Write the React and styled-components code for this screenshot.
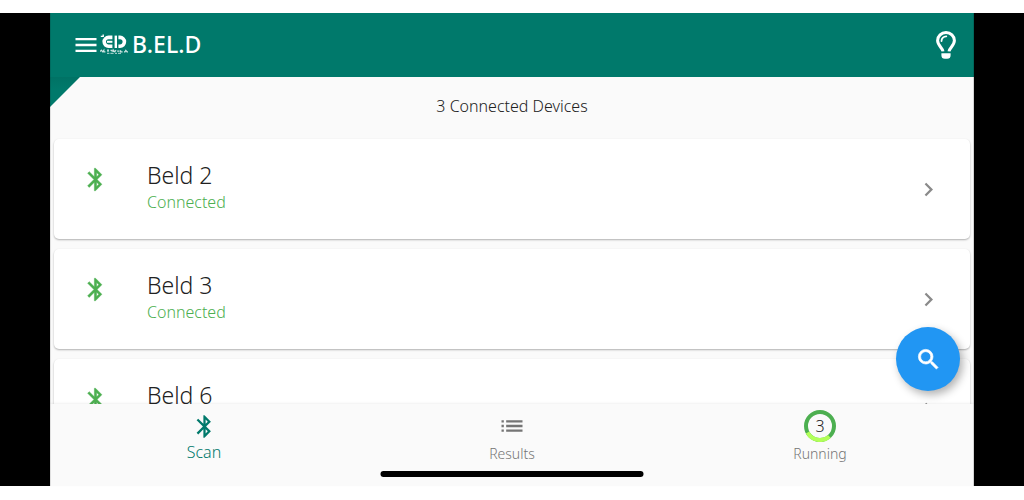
import styled, { createGlobalStyle } from "styled-components";
import {
    MdBluetooth,
    MdChevronRight,
    MdList,
    MdMenu,
    MdSearch,
} from "react-icons/md";

const devices = ["Beld 2", "Beld 3", "Beld 6"];

export default function App() {
    return (
        <>
            <GlobalStyle />
            <Page>
                <Screen>
                    <TopBar>
                        <IconButton aria-label="Open menu">
                            <MdMenu size={28} />
                        </IconButton>
                        <Logo />
                        <Title>B.EL.D</Title>
                        <IconButton aria-label="Toggle light">
                            <BulbIcon />
                        </IconButton>
                    </TopBar>
                    <Content>
                        <Corner />
                        <Summary>{devices.length} Connected Devices</Summary>
                        <DeviceList>
                            {devices.map((name) => (
                                <li key={name}>
                                    <DeviceCard>
                                        <DeviceIcon>
                                            <MdBluetooth size={27} />
                                        </DeviceIcon>
                                        <DeviceText>
                                            <DeviceName>{name}</DeviceName>
                                            <DeviceStatus>Connected</DeviceStatus>
                                        </DeviceText>
                                        <Chevron>
                                            <MdChevronRight size={27} />
                                        </Chevron>
                                    </DeviceCard>
                                </li>
                            ))}
                        </DeviceList>
                        <SearchButton aria-label="Search devices">
                            <MdSearch size={27} />
                        </SearchButton>
                    </Content>
                    <BottomNav>
                        <NavLink href="#scan" $active>
                            <NavIcon>
                                <MdBluetooth size={27} />
                            </NavIcon>
                            Scan
                        </NavLink>
                        <NavLink href="#results">
                            <NavIcon>
                                <MdList size={28} />
                            </NavIcon>
                            Results
                        </NavLink>
                        <NavLink href="#running">
                            <NavIcon>
                                <RunningRing count={devices.length} />
                            </NavIcon>
                            Running
                        </NavLink>
                        <HomeIndicator />
                    </BottomNav>
                </Screen>
            </Page>
        </>
    );
}

function Logo() {
    return (
        <svg width="28" height="22" viewBox="0 0 28 22" aria-hidden="true">
            <g fill="none" stroke="#fff">
                <path d="M12.400 3.400H8.600a4.400 4.400 0 0 0 0 8.800h3.800" strokeWidth="3.600" />
                <path d="M7 7.800h5.400" strokeWidth="2" />
                <path d="M3.200 .6v2.400M.8 2.400h2.400" strokeWidth="1.400" />
                <path d="M15.800 1.600v12.400" strokeWidth="2.400" />
                <path d="M18.400 3.400h1.600a4.400 4.400 0 0 1 0 8.800h-1.600" strokeWidth="3.600" />
                <path
                    d="M0 17.600l1.400-1.400 1.200 1.600 1.200-1.600v1.600h1.600M7 16.200h2M8 16.200v1.800M10.500 16.400h1.600v1.400M13.400 18v-1.800l1.400 1.600 1.200-1.600M17.200 17.200h2.400M20.600 16.200v1.600h2M24 17.800h1l.8-1.400 1.200 1.400h1"
                    strokeWidth="1.200"
                    strokeOpacity=".8"
                />
                <path d="M7 19.400h2.400M10.400 19.400h3.200M15 19.400h2M18 19.400h3" strokeWidth="1.400" strokeOpacity=".6" />
            </g>
        </svg>
    );
}

function BulbIcon() {
    return (
        <svg width="20" height="28" viewBox="0 0 20 28" aria-hidden="true">
            <path
                d="M7 20.400C6.600 17 1.600 14.600 1.600 9.600a8.400 8.100 0 0 1 16.800 0C18.400 14.600 13.400 17 13 20.400"
                fill="none"
                stroke="#fff"
                strokeWidth="3"
            />
            <path d="M5.500 10A4.700 4.700 0 0 1 10.300 5.300" fill="none" stroke="#fff" strokeWidth="1.800" strokeLinecap="round" />
            <path d="M5.400 22.300h9.200v2a3.500 3.500 0 0 1-3.500 3.500H8.900a3.500 3.500 0 0 1-3.500-3.500z" fill="#fff" />
        </svg>
    );
}

function RunningRing({ count }) {
    return (
        <svg width="32" height="32" viewBox="0 0 32 32">
            <circle cx="16" cy="16" r="14" fill="none" stroke="#4caf50" strokeWidth="4" />
            <path d="M25.400 26.400A14 14 0 0 1 3.600 22.500" fill="none" stroke="#b2ff59" strokeWidth="4" />
            <RingCount x="16" y="22" textAnchor="middle">
                {count}
            </RingCount>
        </svg>
    );
}

const GlobalStyle = createGlobalStyle`
    * {
        box-sizing: border-box;
    }

    body {
        margin: 0;
        background: #fff;
        font-family: "Noto Sans", "Open Sans", sans-serif;
        font-weight: 300;
    }

    button {
        border: 0;
        padding: 0;
        background: none;
        color: inherit;
        font: inherit;
        text-align: left;
        cursor: pointer;
    }

    svg {
        display: block;
        flex: none;
    }
`;

const Page = styled.div`
    display: flex;
    height: 100vh;
    padding: 13px 0 14px;
`;

const Screen = styled.div`
    position: relative;
    display: flex;
    flex-direction: column;
    flex: 1;
    border: solid #000;
    border-width: 0 50px;
    background: #fafafa;

    &::after {
        content: "";
        position: absolute;
        inset: 0;
        box-shadow: inset 1px 0 rgba(0, 0, 0, 0.1), inset -1px 0 rgba(0, 0, 0, 0.15);
        pointer-events: none;
    }
`;

const TopBar = styled.header`
    display: flex;
    align-items: center;
    height: 64px;
    padding: 0 18px 0 22px;
    background: #00796b;
    color: #fff;
`;

const IconButton = styled.button`
    display: flex;
`;

const Title = styled.h1`
    flex: 1;
    margin: 0 0 0 4px;
    padding-bottom: 2px;
    font-size: 23px;
    font-weight: 500;
    line-height: 30px;
`;

const Content = styled.main`
    position: relative;
    flex: 1;
    min-height: 0;
    overflow: hidden;
`;

const Corner = styled.div`
    position: absolute;
    top: 0;
    left: 0;
    width: 30px;
    height: 30px;
    background: linear-gradient(#007265, #00796b 12px);
    clip-path: polygon(0 0, 100% 0, 0 100%);
`;

const Summary = styled.p`
    margin: 0;
    padding: 17px 0 21px;
    color: #212121;
    font-size: 16px;
    line-height: 24px;
    text-align: center;
`;

const DeviceList = styled.ul`
    display: flex;
    flex-direction: column;
    gap: 10px;
    margin: 0;
    padding: 0 4px;
    list-style: none;
`;

const DeviceCard = styled.button`
    display: flex;
    align-items: flex-start;
    width: 100%;
    height: 100px;
    padding: 19px 28px;
    border-radius: 5px;
    background: #fff;
    box-shadow: 0 1px 2px rgba(0, 0, 0, 0.3);
`;

const DeviceIcon = styled.span`
    width: 65px;
    padding-top: 8px;
    color: #4caf50;

    path:not([fill="none"]) {
        stroke: currentColor;
        stroke-width: 0.4px;
    }
`;

const DeviceText = styled.span`
    display: flex;
    flex: 1;
    flex-direction: column;
`;

const DeviceName = styled.span`
    color: #212121;
    font-size: 23px;
    line-height: 34px;
`;

const DeviceStatus = styled.span`
    color: #4caf50;
    font-size: 16px;
    line-height: 20px;
`;

const Chevron = styled.span`
    align-self: center;
    color: #8a8a8a;
`;

const SearchButton = styled.button`
    position: absolute;
    right: 14px;
    bottom: 13px;
    display: flex;
    align-items: center;
    justify-content: center;
    width: 64px;
    height: 64px;
    border-radius: 50%;
    background: #2196f3;
    box-shadow: 3px 4px 8px rgba(0, 0, 0, 0.3);
    color: #fff;

    path:not([fill="none"]) {
        stroke: currentColor;
        stroke-width: 0.6px;
    }
`;

const BottomNav = styled.nav`
    position: relative;
    display: grid;
    grid-template-columns: repeat(3, 1fr);
    height: 82px;
    padding-top: 6px;
    background: #fafafa;
    box-shadow: 0 -1px 2px rgba(0, 0, 0, 0.06);
`;

const NavLink = styled.a`
    display: flex;
    flex-direction: column;
    align-items: center;
    color: ${({ $active }) => ($active ? "#00796b" : "#757575")};
    font-size: ${({ $active }) => ($active ? "16px" : "14px")};
    line-height: ${({ $active }) => ($active ? "20px" : "24px")};
    text-decoration: none;
`;

const NavIcon = styled.span`
    display: flex;
    align-items: center;
    height: 32px;
`;

const RingCount = styled.text`
    fill: #212121;
    font-size: 16px;
`;

const HomeIndicator = styled.div`
    position: absolute;
    bottom: 9px;
    left: 50%;
    width: 263px;
    height: 6px;
    border-radius: 3px;
    background: #000;
    transform: translateX(-50%);
`;
